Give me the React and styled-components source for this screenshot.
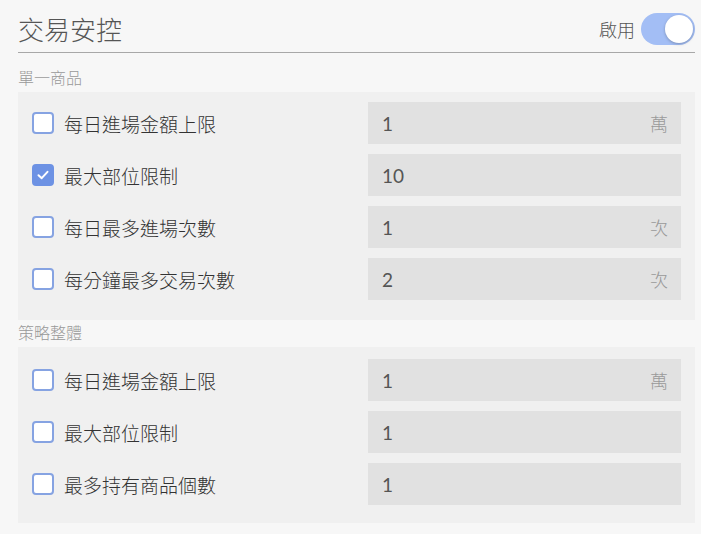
import React from "react";
import styled, { createGlobalStyle } from "styled-components";

const Global = createGlobalStyle`
  html, body { margin: 0; padding: 0; background: #f7f7f7; }
  body { font-family: "Noto Sans", "Noto Sans CJK TC", sans-serif; }
  * { box-sizing: border-box; }
`;

const Page = styled.div`
  padding: 0 6px 0 18px;
  width: 701px;
`;

const Header = styled.div`
  display: flex;
  align-items: center;
  justify-content: space-between;
  height: 53px;
  padding-top: 6px;
  border-bottom: 1px solid #a8a8a8;
`;

const Title = styled.h1`
  margin: 0;
  font-size: 26px;
  font-weight: 300;
  color: #555;
  line-height: 32px;
  font-family: "Noto Sans CJK TC", sans-serif;
`;

const ToggleWrap = styled.label`
  display: flex;
  align-items: center;
  gap: 6px;
  font-size: 18px;
  font-weight: 300;
  color: #555;
  font-family: "Noto Sans CJK TC", sans-serif;
`;

const Track = styled.span`
  position: relative;
  width: 54px;
  height: 32px;
  border-radius: 16px;
  background: ${(p) => (p.$on ? "#a3bef5" : "#ccc")};
`;

const Knob = styled.span`
  position: absolute;
  top: 2px;
  left: ${(p) => (p.$on ? "24px" : "2px")};
  width: 28px;
  height: 28px;
  border-radius: 50%;
  background: #fff;
  box-shadow: 0 1px 3px rgba(0, 0, 0, 0.25);
`;

const SectionLabel = styled.div`
  font-size: 16px;
  font-weight: 300;
  line-height: 24px;
  color: #999;
  padding: ${(p) => p.$top}px 0 ${(p) => p.$bottom}px;
  font-family: "Noto Sans CJK TC", sans-serif;
`;

const Panel = styled.div`
  background: #f0f0f0;
  padding: ${(p) => p.$top}px 14px ${(p) => p.$bottom}px 14px;
  display: flex;
  flex-direction: column;
  gap: 10px;
`;

const Row = styled.div`
  display: grid;
  grid-template-columns: 336px 1fr;
  align-items: center;
`;

const CheckLabel = styled.label`
  display: flex;
  align-items: center;
  gap: 10px;
  font-size: 19px;
  font-weight: 300;
  color: #333;
  font-family: "Noto Sans CJK TC", sans-serif;
`;

const Box = styled.span`
  width: 22px;
  height: 22px;
  border-radius: 4px;
  border: 2px solid ${(p) => (p.$checked ? "#6d92e4" : "#86a3e2")};
  background: ${(p) => (p.$checked ? "#6d92e4" : "#fff")};
  display: flex;
  align-items: center;
  justify-content: center;
`;

const Field = styled.div`
  height: 42px;
  background: #e1e1e1;
  display: flex;
  align-items: center;
  justify-content: space-between;
  padding: 0 13px 0 14px;
`;

const Value = styled.span`
  font-size: 19px;
  font-weight: 400;
  color: #555;
  font-family: Lato, "Noto Sans", sans-serif;
`;

const Unit = styled.span`
  font-size: 18px;
  font-weight: 300;
  color: #999;
  font-family: "Noto Sans CJK TC", sans-serif;
`;

function Check({ checked }) {
  return (
    <Box $checked={checked}>
      {checked && (
        <svg width="14" height="14" viewBox="0 0 14 14">
          <path d="M2.5 7.2 L5.7 10.2 L11.5 3.8" fill="none" stroke="#fff" strokeWidth="2" strokeLinecap="round" strokeLinejoin="round" />
        </svg>
      )}
    </Box>
  );
}

const single = [
  { label: "每日進場金額上限", value: "1", unit: "萬", checked: false },
  { label: "最大部位限制", value: "10", unit: "", checked: true },
  { label: "每日最多進場次數", value: "1", unit: "次", checked: false },
  { label: "每分鐘最多交易次數", value: "2", unit: "次", checked: false },
];

const overall = [
  { label: "每日進場金額上限", value: "1", unit: "萬", checked: false },
  { label: "最大部位限制", value: "1", unit: "", checked: false },
  { label: "最多持有商品個數", value: "1", unit: "", checked: false },
];

function Rows({ items }) {
  return items.map((it, i) => (
    <Row key={i}>
      <CheckLabel>
        <Check checked={it.checked} />
        {it.label}
      </CheckLabel>
      <Field>
        <Value>{it.value}</Value>
        <Unit>{it.unit}</Unit>
      </Field>
    </Row>
  ));
}

export default function App() {
  return (
    <>
      <Global />
      <Page>
        <Header>
          <Title>交易安控</Title>
          <ToggleWrap>
            啟用
            <Track $on>
              <Knob $on />
            </Track>
          </ToggleWrap>
        </Header>
        <SectionLabel $top={12} $bottom={3}>單一商品</SectionLabel>
        <Panel $top={10} $bottom={20}>
          <Rows items={single} />
        </Panel>
        <SectionLabel $top={0} $bottom={3}>策略整體</SectionLabel>
        <Panel $top={12} $bottom={18}>
          <Rows items={overall} />
        </Panel>
      </Page>
    </>
  );
}
